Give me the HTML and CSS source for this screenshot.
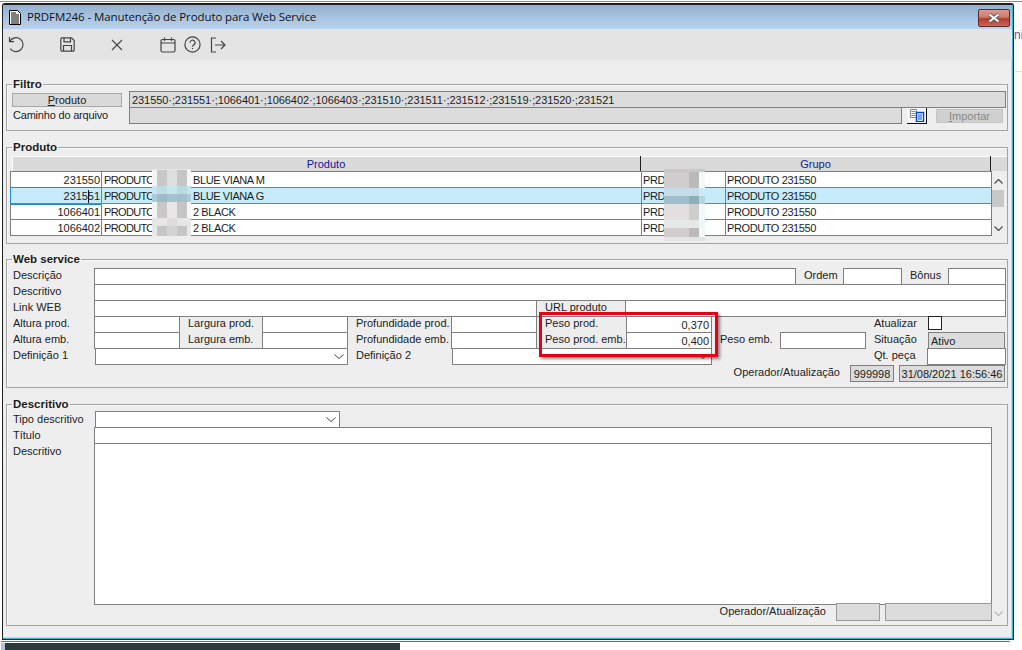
FILE: index.html
```html
<!DOCTYPE html>
<html lang="pt-BR">
<head>
<meta charset="utf-8">
<title>PRDFM246</title>
<link rel="stylesheet" href="styles.css">
</head>
<body>
<div class="desk-line"></div>
<div class="window">
  <div class="frame">
    <header class="titlebar">
      <svg class="doc-icon" width="12" height="15" viewBox="0 0 12 15"><path d="M.5.5h8l3 3v11H.5z" fill="#fff" stroke="#000"/><path d="M2 3h5M2 5h8M2 7h8M2 9h8M2 11h8M2 13h8" stroke="#000" stroke-width="1.1"/></svg>
      <span class="title-text">PRDFM246 - Manutenção de Produto para Web Service</span>
      <button class="close" aria-label="Fechar"><svg width="14" height="10" viewBox="0 0 14 10"><path d="M2.5 1.5l9 7M11.5 1.5l-9 7" stroke="#555" stroke-width="3.6"/><path d="M2.5 1.5l9 7M11.5 1.5l-9 7" stroke="#fff" stroke-width="2.2"/></svg></button>
    </header>
    <nav class="toolbar">
      <svg class="tool t-undo" width="17" height="17" viewBox="0 0 17 17" fill="none" stroke="#444" stroke-width="1.2"><path d="M1.5 1v4.6h4.6"/><path d="M1.8 5.4A7 7 0 1 1 2.2 12.6"/></svg>
      <svg class="tool t-save" width="15" height="15" viewBox="0 0 15 15" fill="none" stroke="#444" stroke-width="1.2"><path d="M1.5.8h10l2.7 2.7v9.2a1.5 1.5 0 0 1-1.5 1.5H2.3a1.5 1.5 0 0 1-1.5-1.5V2.3z"/><path d="M4 1v3.8h6.5V1M3.5 14V8.5h8V14"/></svg>
      <svg class="tool t-x" width="12" height="12" viewBox="0 0 12 12" fill="none" stroke="#444" stroke-width="1.1"><path d="M1 1l10 10M11 1L1 11"/></svg>
      <svg class="tool t-cal" width="16" height="16" viewBox="0 0 16 16" fill="none" stroke="#444" stroke-width="1.2"><rect x="1" y="2.5" width="14" height="12.5" rx="1.5"/><path d="M1 6h14M4.5 .5v3.5M11.5 .5v3.5"/></svg>
      <svg class="tool t-help" width="17" height="17" viewBox="0 0 17 17" fill="none" stroke="#444" stroke-width="1.2"><circle cx="8.5" cy="8.5" r="7.6"/><path d="M6 6.7a2.5 2.5 0 1 1 3.7 2.2c-.8.5-1.2.9-1.2 1.8"/><path d="M8.5 12v1.2"/></svg>
      <svg class="tool t-exit" width="16" height="16" viewBox="0 0 16 16" fill="none" stroke="#444" stroke-width="1.2"><path d="M6 1H1.5v14H6M5 8h10M11 4l4 4-4 4"/></svg>
    </nav>
    <main class="content">
      <fieldset class="group g-filtro">
        <legend>Filtro</legend>
        <div class="row f1">
          <button class="prod-btn"><u>P</u>roduto</button>
          <span></span>
          <div class="field grey codes">231550·;231551·;1066401·;1066402·;1066403·;231510·;231511·;231512·;231519·;231520·;231521</div>
        </div>
        <div class="row f2">
          <span class="lbl path-lbl">Caminho do arquivo</span>
          <div class="field grey"></div>
          <span></span>
          <button class="file-btn" aria-label="Arquivo"><svg width="16" height="13" viewBox="0 0 16 13"><path d="M1.5.5h6v8h-6zM2.5 2.5h4M2.5 4.5h4M2.5 6.5h4" fill="#fff" stroke="#888"/><rect x="7.5" y="3.5" width="7" height="9" fill="#fff" stroke="#0040d0" stroke-width="1.4"/><path d="M9 6h4M9 8h4M9 10h4" stroke="#0040d0"/></svg></button>
          <span></span>
          <button class="import-btn"><u>I</u>mportar</button>
        </div>
      </fieldset>

      <fieldset class="group g-produto">
        <legend>Produto</legend>
        <div class="thead"><div class="th">Produto</div><div class="th">Grupo</div></div>
        <div class="tblwrap">
          <div class="tbl">
            <div class="tr"><div class="td num">231550</div><div class="td"><span class="code">PRODUTO</span>BLUE VIANA M</div><div class="td">PRD</div><div class="td">PRODUTO 231550</div></div>
            <div class="tr sel"><div class="td num">231551<i class="ibeam"></i></div><div class="td"><span class="code">PRODUTO</span>BLUE VIANA G</div><div class="td">PRD</div><div class="td">PRODUTO 231550</div></div>
            <div class="tr"><div class="td num">1066401</div><div class="td"><span class="code">PRODUTO</span>2 BLACK</div><div class="td">PRD</div><div class="td">PRODUTO 231550</div></div>
            <div class="tr"><div class="td num">1066402</div><div class="td"><span class="code">PRODUTO</span>2 BLACK</div><div class="td">PRD</div><div class="td">PRODUTO 231550</div></div>
          </div>
          <div class="scroll">
            <svg class="chev-up" width="9" height="5" viewBox="0 0 9 5" fill="none" stroke="#555" stroke-width="1.4"><path d="M.5 4.5l4-4 4 4"/></svg>
            <div class="thumb"></div>
            <svg class="chev-down" width="9" height="5" viewBox="0 0 9 5" fill="none" stroke="#555" stroke-width="1.4"><path d="M.5.5l4 4 4-4"/></svg>
          </div>
        </div>
        <svg class="blur blur-a" width="39" height="67" viewBox="0 0 39 67" shape-rendering="crispEdges">
          <rect width="39" height="67" fill="#e6e6e6"/>
          <rect y="1" width="5" height="66" fill="#f4f4f4"/>
          <rect x="5" y="1" width="10" height="16" fill="#c8c8c8"/><rect x="15" y="1" width="10" height="16" fill="#e0dfdf"/><rect x="25" y="1" width="10" height="16" fill="#c6c6c6"/><rect x="35" y="1" width="4" height="16" fill="#f6f6f6"/>
          <rect y="17" width="39" height="8" fill="#c8e4ef"/><rect x="5" y="17" width="10" height="8" fill="#bfdbe6"/><rect x="25" y="17" width="10" height="8" fill="#bcd8e3"/>
          <rect y="25" width="39" height="8" fill="#a8ccd8"/><rect x="5" y="25" width="10" height="8" fill="#9ebcc8"/><rect x="15" y="25" width="10" height="8" fill="#a4c2ce"/><rect x="25" y="25" width="10" height="8" fill="#a2bfcb"/>
          <rect x="5" y="33" width="10" height="16" fill="#c8c8c8"/><rect x="15" y="33" width="10" height="16" fill="#e8e6e6"/><rect x="25" y="33" width="10" height="16" fill="#c4c4c4"/><rect x="35" y="33" width="4" height="16" fill="#f6f6f6"/>
          <rect y="49" width="39" height="8" fill="#e6e6e6"/><rect x="15" y="49" width="10" height="8" fill="#dcdcdc"/>
          <rect y="57" width="39" height="10" fill="#e8e8e8"/><rect x="5" y="57" width="10" height="10" fill="#c6c6c6"/><rect x="15" y="57" width="10" height="10" fill="#d4d4d4"/><rect x="25" y="57" width="10" height="10" fill="#c6c6c6"/>
        </svg>
        <svg class="blur blur-b" width="41" height="72" viewBox="0 0 41 72" shape-rendering="crispEdges">
          <rect width="41" height="72" fill="#e2e2e2"/>
          <rect y="0" width="41" height="3" fill="#c8c8c8"/>
          <rect y="3" width="25" height="16" fill="#d0cece"/><rect x="25" y="3" width="10" height="16" fill="#bdb9b9"/><rect x="35" y="3" width="6" height="16" fill="#f2f8fc"/>
          <rect y="19" width="35" height="8" fill="#c4dde8"/><rect x="35" y="19" width="6" height="8" fill="#cfe9f4"/>
          <rect y="27" width="25" height="8" fill="#a0bfca"/><rect x="25" y="27" width="10" height="8" fill="#8faeb8"/><rect x="35" y="27" width="6" height="8" fill="#b2d6e4"/>
          <rect y="35" width="25" height="16" fill="#e2e0e0"/><rect x="25" y="35" width="10" height="16" fill="#cfcccc"/><rect x="35" y="35" width="6" height="16" fill="#f2f8fc"/>
          <rect y="51" width="35" height="8" fill="#e6e8e8"/><rect x="35" y="51" width="6" height="8" fill="#eef6fa"/>
          <rect y="59" width="25" height="9" fill="#cfcdcd"/><rect x="25" y="59" width="10" height="9" fill="#bdb9b9"/><rect x="35" y="59" width="6" height="9" fill="#f2f8fc"/>
          <rect y="68" width="41" height="4" fill="#e4e4e4"/>
        </svg>
      </fieldset>

      <fieldset class="group g-web">
        <legend>Web service</legend>
        <div class="row w1">
          <span class="lbl">Descrição</span><div class="field"></div>
          <span class="lbl pad">Ordem</span><div class="field"></div>
          <span class="lbl pad">Bônus</span><div class="field"></div>
        </div>
        <div class="row w2"><span class="lbl">Descritivo</span><div class="field"></div></div>
        <div class="row w3">
          <span class="lbl">Link WEB</span><div class="field"></div>
          <div class="box boxed">URL produto</div><div class="field nl"></div>
        </div>
        <div class="row w4">
          <span class="lbl">Altura prod.</span><div class="field"></div>
          <div class="box top">Largura prod.</div><div class="field"></div>
          <span class="lbl pad">Profundidade prod.</span><div class="field"></div>
          <div class="box top">Peso prod.</div><div class="field right">0,370</div>
          <span></span>
          <span class="lbl pad">Atualizar</span><div class="check"></div>
        </div>
        <div class="row w5">
          <span class="lbl">Altura emb.</span><div class="field"></div>
          <div class="box bottom">Largura emb.</div><div class="field"></div>
          <span class="lbl pad">Profundidade emb.</span><div class="field"></div>
          <div class="box bottom">Peso prod. emb.</div><div class="field right">0,400</div>
          <span class="lbl pad">Peso emb.</span><div class="field"></div>
          <span class="lbl pad">Situação</span><div class="field grey">Ativo</div>
        </div>
        <div class="row w6">
          <span class="lbl">Definição 1</span>
          <div class="field select"><svg width="10" height="5" viewBox="0 0 10 5" fill="none" stroke="#444"><path d="M.5.5L5 4.5 9.5.5"/></svg></div>
          <span class="lbl pad">Definição 2</span>
          <div class="field select"><svg width="10" height="5" viewBox="0 0 10 5" fill="none" stroke="#444"><path d="M.5.5L5 4.5 9.5.5"/></svg></div>
          <span></span>
          <span class="lbl">Qt. peça</span><div class="field"></div>
        </div>
        <div class="row w7">
          <span class="lbl rt">Operador/Atualização</span>
          <div class="field grey center">999998</div><span></span><div class="field grey center">31/08/2021 16:56:46</div>
        </div>
      </fieldset>

      <fieldset class="group g-desc">
        <legend>Descritivo</legend>
        <div class="row d1">
          <span class="lbl">Tipo descritivo</span>
          <div class="field select"><svg width="10" height="5" viewBox="0 0 10 5" fill="none" stroke="#444"><path d="M.5.5L5 4.5 9.5.5"/></svg></div>
        </div>
        <div class="row d2"><span class="lbl">Título</span><div class="field"></div></div>
        <div class="row d3"><span class="lbl">Descritivo</span><div class="field area"></div></div>
        <div class="row d4">
          <span class="lbl rt">Operador/Atualização</span>
          <div class="field grey light"></div><span></span><div class="field grey light"></div>
          <svg class="chev-off" width="9" height="5" viewBox="0 0 9 5" fill="none" stroke="#bbb" stroke-width="1.4"><path d="M.5.5l4 4 4-4"/></svg>
        </div>
      </fieldset>
    </main>
  </div>
</div>
<div class="under-line"></div>
<div class="taskbar"><span class="task-edge"></span><span class="task-dark"></span></div>
<span class="behind-text">ni</span>
<span class="behind-line"></span>
<div class="highlight"></div>
</body>
</html>
```
FILE: styles.css
```css
* { box-sizing: border-box; }
html, body { margin: 0; height: 650px; overflow: hidden; }
body {
  position: relative;
  background: #fff;
  font: 11px/16px "Liberation Sans", Arial, sans-serif;
  color: #1c1c1c;
}
button { font: inherit; letter-spacing: inherit; padding: 0; margin: 0; color: inherit; }
.desk-line { height: 1px; margin-top: 1px; margin-bottom: 1px; background: #8c8c8c; }
.window {
  width: 1012px;
  height: 637px;
  margin-left: 2px;
  border: 1px solid #1e1e1e;
  border-top-width: 2px;
  border-radius: 3px 3px 0 0;
  background: #eee;
}
.frame {
  height: 100%;
  display: flex;
  flex-direction: column;
  border-right: 1px solid #39b4d8;
  border-bottom: 1px solid #39b4d8;
  box-shadow: inset -1px -1px 0 #bcdcec;
}
.titlebar {
  height: 24px;
  flex: none;
  display: flex;
  align-items: center;
  padding: 0 2px 0 6px;
  background: linear-gradient(#95b1cf, #b9d3ee);
  font: 11.5px/16px "Open Sans", "Liberation Sans", sans-serif;
  letter-spacing: -.1px;
  color: #111;
}
.doc-icon { flex: none; }
.title-text { margin-left: 6px; }
.close {
  margin-left: auto;
  width: 32px;
  height: 18px;
  margin-top: 2px;
  border: 1px solid #5e2a2a;
  border-radius: 2px;
  background: linear-gradient(#dc9a90 0, #cf7a6e 45%, #b23a2a 55%, #c8685a 100%);
  display: flex;
  align-items: center;
  justify-content: center;
}
.toolbar {
  height: 31px;
  flex: none;
  display: flex;
  align-items: center;
  background: #e4e4e4;
}
.tool { flex: none; }
.t-undo { margin-left: 5px; }
.t-save { margin-left: 35px; }
.t-x { margin-left: 36px; }
.t-cal { margin-left: 37px; }
.t-help { margin-left: 8px; }
.t-exit { margin-left: 9px; }
.content { flex: 1; padding-left: 3px; }

.group {
  position: relative;
  width: 1002px;
  margin: 8px 0 0;
  padding: 0;
  min-width: 0;
  border: 1px solid #a4a4a4;
  box-shadow: inset 1px 1px 0 #f8f8f8;
}
.group legend {
  margin-left: 5px;
  padding: 0 1px;
  font: bold 11.5px/14px "Liberation Sans", Arial, sans-serif;
}
.g-filtro { margin-top: 17px; padding-bottom: 7px; }
.g-produto { margin-top: 9px; padding: 2px 0 7px; }
.g-web { padding: 2px 0 5px; }
.g-desc { margin-top: 9px; padding-bottom: 6px; }

.row { display: grid; grid-auto-rows: 16px; margin-left: 6px; }
.lbl { white-space: nowrap; line-height: 15px; }
.pad { padding-left: 8px; }
.rt { text-align: right; padding-right: 10px; }
.field {
  height: 17px;
  background: #fff;
  border: 1px solid #7f7f7f;
  padding: 0 2px;
  line-height: 16px;
  white-space: nowrap;
}
.grey { background: #dcdcdc; }
.codes { letter-spacing: -.07px; }
.path-lbl { line-height: 17px; letter-spacing: -.2px; }
.light { border-color: #999; }
.nl { border-left: 0; }
.right { text-align: right; padding-right: 2px; }
.center { text-align: center; padding: 0; }
.select { display: flex; align-items: center; justify-content: flex-end; padding-right: 3px; }
.box { background: #ededed; padding-left: 8px; line-height: 14px; height: 17px; white-space: nowrap; border: 0 solid #7f7f7f; }
.boxed { border-width: 1px 1px 1px 0; line-height: 13px; }
.top { border-top-width: 1px; line-height: 13px; }
.bottom { border-bottom-width: 1px; }
.check { width: 14px; height: 14px; background: #fff; border: 1px solid #222; }

.f1 { margin-left: 5px; grid-template-columns: 110px 7px 877px; }
.prod-btn { height: 14px; margin-top: 2px; background: #d9d9d9; border: 1px solid #a8a8a8; line-height: 12px; }
.f2 { grid-template-columns: 116px 773px 5px 20px 9px 67px; }
.file-btn {
  height: 16px;
  margin-top: 1px;
  background: #f4f4f4;
  border: 0;
  border-right: 1px solid #111;
  border-bottom: 1px solid #111;
  display: flex;
  align-items: center;
  justify-content: center;
}
.import-btn { height: 14px; margin-top: 2px; background: #d0d0d0; border: 1px solid #c4c4c4; color: #888; line-height: 12px; }

.thead {
  display: grid;
  grid-template-columns: 629px 350px;
  height: 15px;
  margin-left: 5px;
  background: #d9d9d9;
  box-shadow: inset 0 1px 0 #fff, inset 1px 0 0 #fff;
}
.th { text-align: center; color: #1515a0; line-height: 16px; border-right: 1px solid #1e1e1e; }
.tblwrap { display: flex; margin-left: 3px; }
.tbl { width: 982px; flex: none; border: 1px solid #7f7f7f; border-bottom: 0; background: #fff; }
.tr {
  display: grid;
  grid-template-columns: 90px 540px 84px 1fr;
  height: 16px;
  border-bottom: 1px solid #7f7f7f;
}
.td { padding-left: 1px; line-height: 16px; white-space: nowrap; border-left: 1px solid #7f7f7f; letter-spacing: -.4px; }
.td:first-child { border-left: 0; }
.num { position: relative; text-align: right; padding-right: 1px; letter-spacing: -.05px; }
.code { display: inline-block; width: 90px; padding-left: 1px; letter-spacing: -.65px; }
.sel { background: #c6ecfb; }
.sel .num { box-shadow: 0 -1px 0 #1f87d6, 0 1px 0 #1f87d6, -1px 0 0 #1f87d6; }
.ibeam { position: absolute; top: 2px; left: 77px; width: 1px; height: 13px; background: #111; }
.scroll { width: 12px; flex: none; display: flex; flex-direction: column; align-items: center; padding-top: 8px; }
.chev-up, .chev-down { flex: none; }
.thumb { width: 12px; height: 17px; margin: 6px 0 19px; background: #c8c8c8; flex: none; }
.blur { position: absolute; }
.blur-a { left: 145px; top: 15px; }
.blur-b { left: 657px; top: 15px; }

.w1 { grid-template-columns: 81px 702px 47px 59px 46px 58px; }
.w2 { grid-template-columns: 81px 912px; }
.w3 { grid-template-columns: 81px 443px 89px 380px; }
.w5 { grid-template-columns: 81px 86px 82px 86px 103px 86px 89px 86px 68px 86px 62px 77px; }
.w4 { grid-template-columns: 81px 86px 82px 86px 103px 86px 89px 86px 154px 62px 77px; }
.w6 { grid-template-columns: 82px 253px 104px 260px 162px 53px 79px; }
.w7 { height: 17px; margin-top: 1px; grid-template-columns: 837px 44px 5px 106px; }
.d1 { grid-template-columns: 82px 245px; }
.d2 { grid-template-columns: 81px 898px; }
.d3 { grid-auto-rows: 160px; grid-template-columns: 81px 898px; }
.area { height: 162px; }
.d4 { grid-template-columns: 823px 44px 5px 107px 13px; }
.d4 .field { height: 18px; }
.g-desc .lbl { line-height: 17px; }
.chev-off { align-self: center; justify-self: center; margin-top: 4px; }

.under-line { width: 1009px; height: 1px; margin: 1px 0 0 1px; background: #6e6e6e; }
.taskbar { display: flex; height: 7px; margin-top: 1px; }
.task-edge { width: 4px; margin-left: 1px; background: #b5c0e0; }
.task-dark { width: 395px; background: #2d3a3c; }
.behind-text { position: absolute; left: 1014px; top: 27px; font-size: 12px; color: #7a4a8a; }
.behind-line { position: absolute; left: 1015px; top: 71px; width: 7px; height: 1px; background: #ddd; }
.highlight {
  position: absolute;
  left: 539px;
  top: 312px;
  width: 179px;
  height: 45px;
  border: 3px solid #e60012;
  box-shadow: 2px 2px 3px rgba(0, 0, 0, .45);
}
```
